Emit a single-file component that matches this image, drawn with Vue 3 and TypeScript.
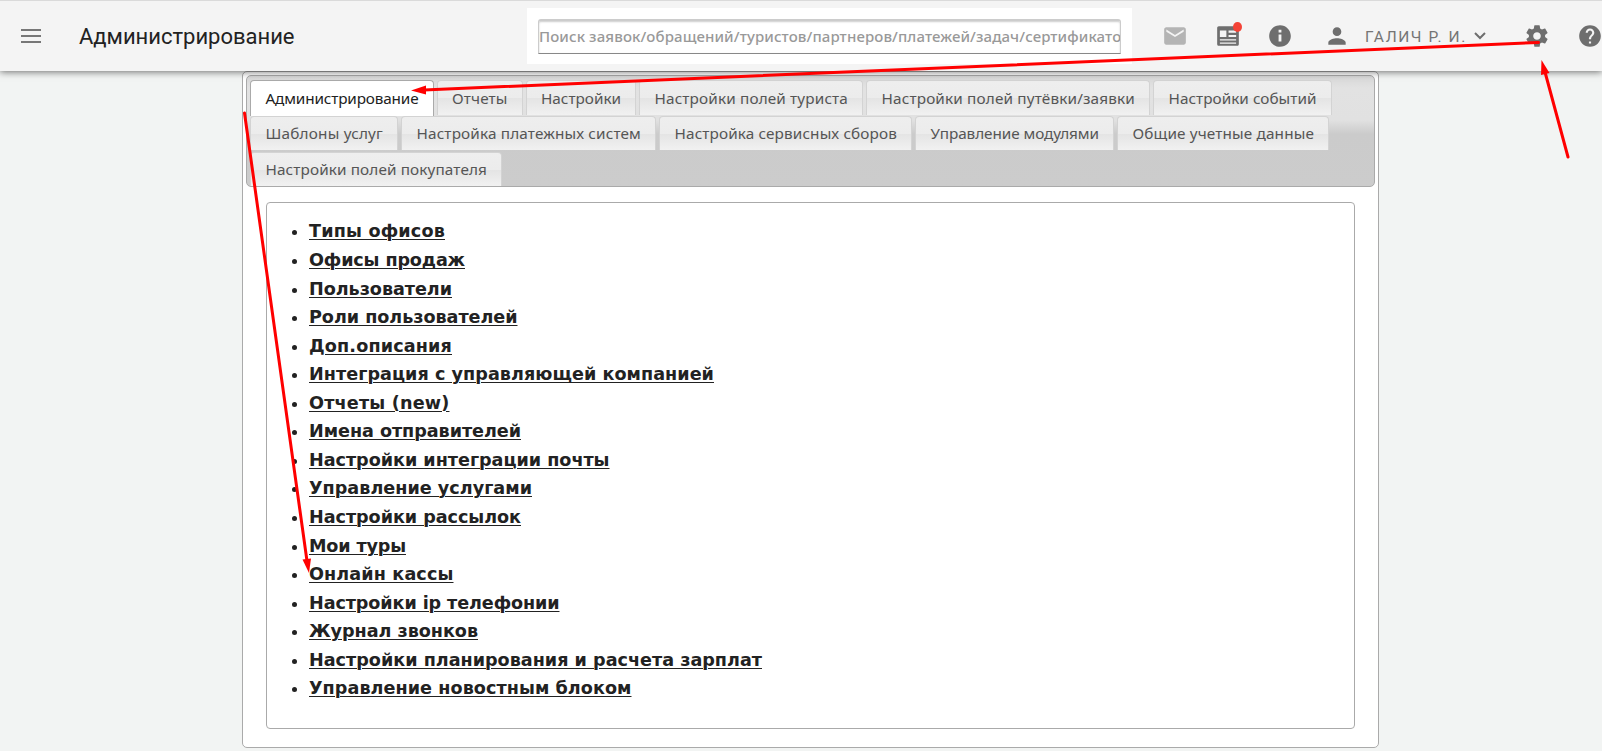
<script setup lang="ts">
import type { Directive } from 'vue'

interface Label {
  text: string
  width: number
}

const tabRows: Label[][] = [
  [
    { text: 'Администрирование', width: 153 },
    { text: 'Отчеты', width: 55.5 },
    { text: 'Настройки', width: 80 },
    { text: 'Настройки полей туриста', width: 193.5 },
    { text: 'Настройки полей путёвки/заявки', width: 253.5 },
    { text: 'Настройки событий', width: 148 },
  ],
  [
    { text: 'Шаблоны услуг', width: 117.5 },
    { text: 'Настройка платежных систем', width: 224.5 },
    { text: 'Настройка сервисных сборов', width: 222.5 },
    { text: 'Управление модулями', width: 168.5 },
    { text: 'Общие учетные данные', width: 181.5 },
  ],
  [{ text: 'Настройки полей покупателя', width: 221.5 }],
]

const links: Label[] = [
  { text: 'Типы офисов', width: 136 },
  { text: 'Офисы продаж', width: 156 },
  { text: 'Пользователи', width: 143 },
  { text: 'Роли пользователей', width: 208.5 },
  { text: 'Доп.описания', width: 143 },
  { text: 'Интеграция с управляющей компанией', width: 405 },
  { text: 'Отчеты (new)', width: 140.5 },
  { text: 'Имена отправителей', width: 212 },
  { text: 'Настройки интеграции почты', width: 300.5 },
  { text: 'Управление услугами', width: 223 },
  { text: 'Настройки рассылок', width: 212 },
  { text: 'Мои туры', width: 97 },
  { text: 'Онлайн кассы', width: 144.5 },
  { text: 'Настройки ip телефонии', width: 250.5 },
  { text: 'Журнал звонков', width: 169 },
  { text: 'Настройки планирования и расчета зарплат', width: 453 },
  { text: 'Управление новостным блоком', width: 322.5 },
]

// Spreads the letters so that a label takes the given width.
const vFit: Directive<HTMLElement, number> = {
  mounted(el, binding) {
    const natural = el.getBoundingClientRect().width
    const count = (el.textContent ?? '').length
    if (count) el.style.letterSpacing = `${(binding.value - natural) / count}px`
  },
}
</script>

<template>
  <div class="page">
    <header class="bar">
      <svg class="menu" viewBox="0 0 20 14"><path d="M0 1h20M0 7h20M0 13h20" /></svg>
      <h1><span v-fit="215.5">Администрирование</span></h1>
      <div class="search">
        <div class="field">
          <span v-fit="591">Поиск заявок/обращений/туристов/партнеров/платежей/задач/сертификатов</span>
        </div>
      </div>
      <nav class="tools">
        <svg class="icon mail" viewBox="0 0 24 24"><path d="M20 4H4c-1.1 0-2 .9-2 2v12c0 1.1.9 2 2 2h16c1.1 0 2-.9 2-2V6c0-1.1-.9-2-2-2zm0 4l-8 5-8-5V6l8 5 8-5v2z" /></svg>
        <span class="news">
          <svg class="icon" viewBox="0 0 24 24"><path fill-rule="evenodd" d="M3.500 3h17c.8 0 1.500.7 1.500 1.500v15c0 .8-.7 1.500-1.500 1.500h-17c-.8 0-1.500-.7-1.500-1.500v-15C2 3.700 2.700 3 3.500 3zM4.500 7v6h6V7zM12.500 7v2h7V7zM12.500 11v2h7v-2zM4.500 15v1.200h15V15zM4.500 18v1.200h15V18z" /></svg>
          <i class="dot"></i>
        </span>
        <svg class="icon info" viewBox="0 0 24 24"><path d="M12 2C6.480 2 2 6.480 2 12s4.480 10 10 10 10-4.480 10-10S17.520 2 12 2zm1.300 15h-2.600v-6.500h2.600V17zm0-8.300h-2.600V6.200h2.600v2.500z" /></svg>
        <svg class="icon person" viewBox="0 0 24 24"><path d="M12 12c2.210 0 4-1.790 4-4s-1.790-4-4-4-4 1.790-4 4 1.790 4 4 4zm0 2c-2.670 0-8 1.340-8 4v2h16v-2c0-2.660-5.330-4-8-4z" /></svg>
        <span class="user"><span v-fit="102">ГАЛИЧ Р. И.</span></span>
        <svg class="chevron" viewBox="0 0 12 8"><path d="M1 1l5 5 5-5" /></svg>
        <svg class="icon gear" viewBox="0 0 24 24"><path d="M19.430 12.980c.04-.32.07-.64.07-.98s-.03-.66-.07-.98l2.110-1.650c.19-.15.24-.42.12-.64l-2-3.460c-.12-.22-.39-.3-.61-.22l-2.490 1c-.52-.4-1.080-.73-1.690-.98l-.38-2.650C14.460 2.180 14.250 2 14 2h-4c-.25 0-.46.18-.49.42l-.38 2.650c-.61.25-1.170.59-1.690.98l-2.490-1c-.23-.09-.49 0-.61.22l-2 3.460c-.13.22-.07.49.12.64l2.110 1.650c-.04.32-.07.65-.07.98s.03.66.07.98l-2.110 1.650c-.19.15-.24.42-.12.64l2 3.460c.12.22.39.3.61.22l2.490-1c.52.4 1.080.73 1.690.98l.38 2.650c.03.24.24.42.49.42h4c.25 0 .46-.18.49-.42l.38-2.650c.61-.25 1.170-.59 1.690-.98l2.490 1c.23.09.49 0 .61-.22l2-3.460c.12-.22.07-.49-.12-.64l-2.110-1.650zM12 15.500c-1.930 0-3.500-1.570-3.500-3.500s1.570-3.500 3.500-3.500 3.500 1.570 3.500 3.500-1.570 3.500-3.500 3.500z" /></svg>
        <svg class="icon help" viewBox="0 0 24 24"><path d="M12 2C6.480 2 2 6.480 2 12s4.480 10 10 10 10-4.480 10-10S17.520 2 12 2zm1 17h-2v-2h2v2zm2.070-7.750l-.9.920C13.450 12.900 13 13.500 13 15h-2v-.5c0-1.100.45-2.100 1.170-2.830l1.240-1.260c.37-.36.59-.86.59-1.410 0-1.100-.9-2-2-2s-2 .9-2 2H8c0-2.210 1.790-4 4-4s4 1.790 4 4c0 .88-.36 1.680-.93 2.250z" /></svg>
      </nav>
    </header>

    <main class="tabs">
      <div class="tablist">
        <div v-for="(row, r) in tabRows" :key="r" class="row">
          <a v-for="(tab, i) in row" :key="tab.text" class="tab" :class="{ active: r === 0 && i === 0 }">
            <span v-fit="tab.width">{{ tab.text }}</span>
          </a>
        </div>
      </div>
      <section class="panel">
        <ul>
          <li v-for="link in links" :key="link.text">
            <a v-fit="link.width">{{ link.text }}</a>
          </li>
        </ul>
      </section>
    </main>

    <svg class="arrows" viewBox="0 0 1602 751">
      <path d="M1538.500 42.500L424 90M1568 157L1545 72M244.500 113L307 561" />
      <polygon points="411,90.500 426,85.500 426,94.500" />
      <polygon points="1541.500,60 1541,75 1549.500,73" />
      <polygon points="309,573 302.500,559.500 311,558.500" />
    </svg>
  </div>
</template>

<style>
body {
  margin: 0;
  overflow: hidden;
}
</style>

<style scoped>
.page {
  position: relative;
  box-sizing: border-box;
  width: 1602px;
  height: 751px;
  overflow: hidden;
  background: #f2f4f3;
  color: #222;
}
.bar {
  position: relative;
  z-index: 1;
  box-sizing: border-box;
  display: flex;
  height: 71px;
  border-top: 1px solid #dadada;
  background: #f4f4f4;
  box-shadow: 0 1px 7px rgba(0, 0, 0, 0.55);
}
.bar > * {
  flex: none;
}
.menu {
  width: 20px;
  height: 14px;
  margin: 28px 0 0 20.5px;
  fill: none;
  stroke: #777;
  stroke-width: 1.8;
}
h1 {
  width: 448px;
  margin: 21px 0 0 38.5px;
  font: 400 22px/30px Roboto, sans-serif;
  white-space: nowrap;
}
.search {
  box-sizing: border-box;
  width: 605px;
  height: 56px;
  margin-top: 7px;
  padding: 11px;
  background: #fff;
}
.field {
  box-sizing: border-box;
  height: 35px;
  overflow: hidden;
  border: 1px solid #ccc;
  border-top: 2px solid #ccc;
  border-bottom-color: #888;
  border-radius: 3px 3px 0 0;
  box-shadow: inset 0 1px 2px #ccc;
  color: #999;
  font: 500 15px/30px "Noto Sans", sans-serif;
  white-space: nowrap;
}
.tools {
  display: flex;
  height: 70px;
  align-items: center;
  margin-left: 30px;
}
.tools > * {
  flex: none;
}
.icon {
  display: block;
  width: 26px;
  height: 26px;
  fill: #6e6e6e;
}
.mail {
  fill: #b4b4b4;
}
.news {
  position: relative;
  margin-left: 27px;
}
.dot {
  position: absolute;
  top: -1px;
  right: -1px;
  width: 9px;
  height: 10px;
  border-radius: 50%;
  background: #f44336;
}
.info {
  margin-left: 26px;
}
.person {
  margin-left: 31px;
}
.user {
  width: 102px;
  margin-left: 15px;
  padding-top: 2px;
  color: #757575;
  font: 400 15.5px/24px Roboto, sans-serif;
  white-space: nowrap;
}
.chevron {
  width: 12px;
  height: 8px;
  margin-left: 7px;
  fill: none;
  stroke: #6e6e6e;
  stroke-width: 2;
}
.gear {
  margin-left: 38px;
}
.help {
  margin-left: 26.5px;
}
.tabs {
  box-sizing: border-box;
  width: 1137px;
  height: 677px;
  margin-left: 242px;
  padding: 3px;
  border: 1px solid #aaa;
  border-radius: 5px;
  background: #fff;
}
.tablist {
  box-sizing: border-box;
  height: 112px;
  padding: 4px 0 0 3px;
  border: 1px solid #aaa;
  border-radius: 5px;
  background: linear-gradient(#d7d7d7, #e2e2e2 12px, #e1e1e1 44px, #cbcbcb 58px, #ccc);
}
.row {
  display: flex;
  gap: 3px;
  height: 36px;
}
.tab {
  box-sizing: border-box;
  height: 35px;
  padding: 0 14px 0 14.5px;
  border: 1px solid #d3d3d3;
  border-bottom: 0;
  border-radius: 4px 4px 0 0;
  background: linear-gradient(#eee, #ececec 50%, #e4e4e4 51%, #f1f1f1);
  color: #555;
  font: 400 15.3px/34px "Noto Sans", sans-serif;
  white-space: nowrap;
}
.row:nth-child(n + 2) .tab {
  height: 34px;
  line-height: 32px;
}
.tab.active {
  height: 36px;
  border-color: #aaa;
  background: #fff;
  color: #212121;
}
.panel {
  box-sizing: border-box;
  width: 1089px;
  height: 527px;
  margin: 15px 0 0 20px;
  border: 1px solid #aaa;
  border-radius: 4px;
}
ul {
  margin: 14.4px 0 0;
  padding-left: 42px;
  font: 700 17.6px/28.560px "DejaVu Sans", sans-serif;
  white-space: nowrap;
}
li a {
  text-decoration: underline;
  text-decoration-thickness: 1px;
  text-underline-offset: 1.5px;
}
.arrows {
  position: absolute;
  z-index: 2;
  inset: 0;
  width: 1602px;
  height: 751px;
  fill: #f00;
  pointer-events: none;
}
.arrows path {
  fill: none;
  stroke: #f00;
  stroke-width: 3;
  stroke-linecap: round;
}
</style>
